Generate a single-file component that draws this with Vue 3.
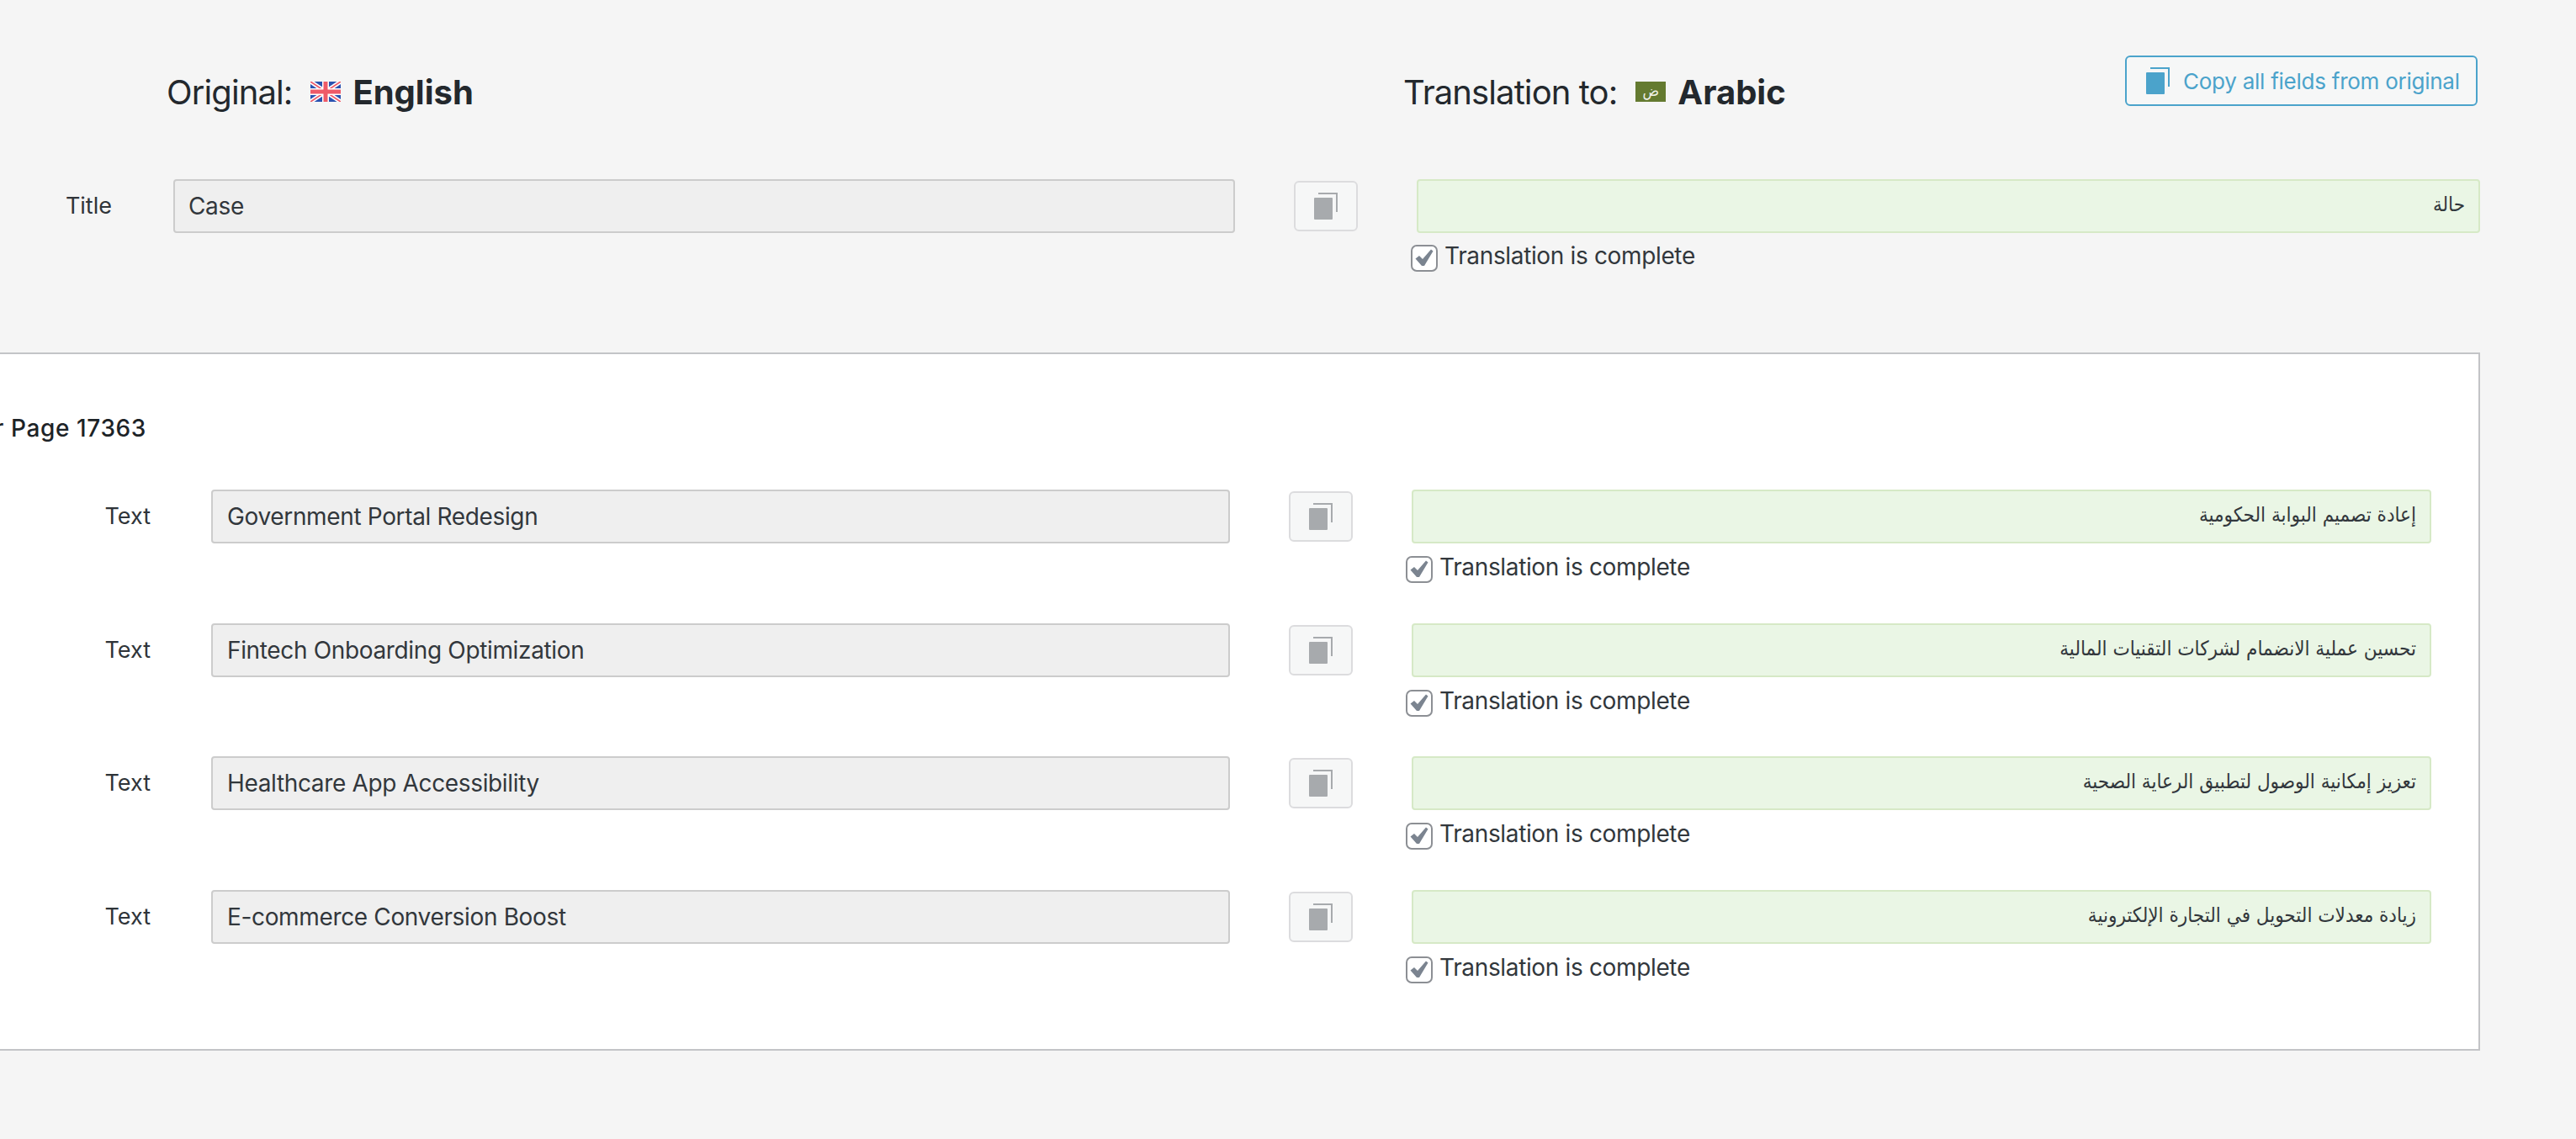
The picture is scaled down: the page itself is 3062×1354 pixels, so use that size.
<script setup>
const rows = [
  { en: 'Government Portal Redesign', ar: 'إعادة تصميم البوابة الحكومية' },
  { en: 'Fintech Onboarding Optimization', ar: 'تحسين عملية الانضمام لشركات التقنيات المالية' },
  { en: 'Healthcare App Accessibility', ar: 'تعزيز إمكانية الوصول لتطبيق الرعاية الصحية' },
  { en: 'E-commerce Conversion Boost', ar: 'زيادة معدلات التحويل في التجارة الإلكترونية' },
]
</script>

<template>
  <div class="page">
    <header class="head">
      <h2 class="lang lang-orig">
        <span>Original:</span>
        <svg class="flag" viewBox="0 0 36 24" width="36" height="24">
          <rect width="36" height="24" fill="#2a52b0" />
          <path d="M0 0L36 24M36 0L0 24" stroke="#fff" stroke-width="5" />
          <path d="M0 0L36 24M36 0L0 24" stroke="#ee5a68" stroke-width="1.8" />
          <path d="M18 0V24M0 12H36" stroke="#fff" stroke-width="8" />
          <path d="M18 0V24M0 12H36" stroke="#ee5a68" stroke-width="5" />
        </svg>
        <strong>English</strong>
      </h2>
      <h2 class="lang">
        <span>Translation to:</span>
        <span class="flag flag-ar"><span>ض</span></span>
        <strong>Arabic</strong>
      </h2>
      <button class="copy-all">
        <svg viewBox="0 0 28 32" width="28" height="32">
          <path d="M5 0H28V23H26V2H5Z" fill="#4ba3cb" />
          <rect x="0" y="6" width="22" height="26" rx="1" fill="#4ba3cb" />
        </svg>
        <span>Copy all fields from original</span>
      </button>
    </header>

    <div class="row row-title">
      <label class="lbl">Title</label>
      <div class="field src">Case</div>
      <button class="copy">
        <svg viewBox="0 0 28 32" width="28" height="32">
          <path d="M5 0H28V23H26V2H5Z" fill="#a7aaad" />
          <rect x="0" y="6" width="22" height="26" rx="1" fill="#a7aaad" />
        </svg>
      </button>
      <div class="target">
        <div class="field tgt" dir="rtl">حالة</div>
        <div class="done">
          <span class="cb">
            <svg viewBox="0 0 28 28" width="28" height="28"><path d="M3.5 14.5L8 11L12 15L22 3.5L24.5 5.5L14 23H11Z" fill="#7b8490" /></svg>
          </span>
          <span>Translation is complete</span>
        </div>
      </div>
    </div>

    <section class="panel">
      <h3 class="panel-title"><span>Slider Page 17363</span></h3>
      <div v-for="r in rows" :key="r.en" class="row row-text">
        <label class="lbl">Text</label>
        <div class="field src">{{ r.en }}</div>
        <button class="copy">
          <svg viewBox="0 0 28 32" width="28" height="32">
            <path d="M5 0H28V23H26V2H5Z" fill="#a7aaad" />
            <rect x="0" y="6" width="22" height="26" rx="1" fill="#a7aaad" />
          </svg>
        </button>
        <div class="target">
          <div class="field tgt" dir="rtl">{{ r.ar }}</div>
          <div class="done">
            <span class="cb">
              <svg viewBox="0 0 28 28" width="28" height="28"><path d="M3.5 14.5L8 11L12 15L22 3.5L24.5 5.5L14 23H11Z" fill="#7b8490" /></svg>
            </span>
            <span>Translation is complete</span>
          </div>
        </div>
      </div>
    </section>
  </div>
</template>

<style>
html, body { margin: 0; background: #f5f5f5; overflow: hidden; }
</style>

<style scoped>
.page {
  width: 3062px;
  height: 1354px;
  overflow: hidden;
  box-sizing: border-box;
  padding-top: 66px;
  background: #f5f5f5;
  font-family: Inter, "Noto Sans", sans-serif;
  font-size: 28px;
  letter-spacing: -0.35px;
  color: #2f3439;
}
.head {
  display: flex;
  align-items: flex-start;
  padding-left: 198px;
  height: 147px;
}
.lang {
  display: flex;
  align-items: center;
  margin: 0;
  padding-top: 19px;
  height: 48px;
  font-size: 40px;
  font-weight: 400;
  color: #23282d;
  letter-spacing: -0.9px;
}
.lang-orig { width: 1470px; flex: none; }
.lang strong { font-weight: 700; margin-left: 14px; letter-spacing: 0; }
.flag { width: 36px; height: 24px; margin-left: 22px; flex: none; display: block; }
.flag-ar {
  background: #647a30;
  color: #eef0e6;
  font-family: "DejaVu Sans Condensed", "DejaVu Sans", sans-serif;
  font-size: 18px;
  line-height: 22px;
  text-align: center;
  letter-spacing: 0;
}
.copy-all {
  margin-left: auto;
  margin-right: 117px;
  box-sizing: border-box;
  width: 419px;
  height: 60px;
  display: flex;
  align-items: center;
  gap: 16px;
  padding: 0 0 0 23px;
  background: #f6f7f7;
  border: 2px solid #4ba3cb;
  border-radius: 6px;
  color: #4ba3cb;
  font: inherit;
  font-size: 26px;
  letter-spacing: -0.25px;
}
.row { display: flex; align-items: flex-start; }
.lbl { text-align: right; line-height: 64px; flex: none; font-size: 27px; letter-spacing: 0; }
.field {
  box-sizing: border-box;
  height: 64px;
  line-height: 60px;
  border-radius: 4px;
  white-space: nowrap;
  overflow: hidden;
}
.src {
  flex: none;
  background: #efefef;
  border: 2px solid #ccc;
  padding: 0 17px;
  color: #32373c;
}
.tgt {
  background: #eaf6e5;
  border: 2px solid #d6e9c6;
  padding: 0 16px;
  font-family: "DejaVu Sans Condensed", "DejaVu Sans", sans-serif;
  font-size: 24px;
  line-height: 57px;
  letter-spacing: 0;
  color: #32373c;
}
.copy {
  box-sizing: border-box;
  flex: none;
  width: 76px;
  height: 60px;
  margin-top: 2px;
  padding: 0;
  display: flex;
  align-items: center;
  justify-content: center;
  background: #f6f7f7;
  border: 2px solid #dcdcde;
  border-radius: 6px;
}
.target { flex: none; }
.done {
  display: flex;
  align-items: flex-start;
  margin: 14px 0 0 -7px;
  height: 32px;
  line-height: 27px;
  color: #32373c;
}
.cb {
  box-sizing: border-box;
  width: 32px;
  height: 32px;
  flex: none;
  margin-right: 8px;
  border: 2px solid #8c8f94;
  border-radius: 7px;
  background: #fff;
  display: flex;
  align-items: center;
  justify-content: center;
}
.row-title .lbl { width: 133px; margin-right: 73px; }
.row-title .src { width: 1262px; margin-right: 70px; padding: 0 16px; }
.row-title .copy { margin-right: 70px; }
.row-title .target { width: 1264px; }
.panel {
  box-sizing: border-box;
  width: 2950px;
  height: 830px;
  margin: 96px 0 0 -2px;
  background: #fff;
  border: 2px solid #c3c4c7;
}
.panel-title {
  display: flex;
  justify-content: flex-end;
  width: 174px;
  margin: 0;
  height: 161px;
  padding-top: 70px;
  box-sizing: border-box;
  font-size: 28px;
  font-weight: 500;
  line-height: 36px;
  letter-spacing: 0.6px;
  color: #1d2327;
  white-space: nowrap;
}
.row-text { margin-bottom: 47.67px; }
.row-text .lbl { width: 179px; margin-right: 72px; }
.row-text .src { width: 1211px; margin-right: 70px; }
.row-text .copy { margin-right: 70px; }
.row-text .target { width: 1212px; }
.row-text .done { margin-top: 15px; }
</style>
